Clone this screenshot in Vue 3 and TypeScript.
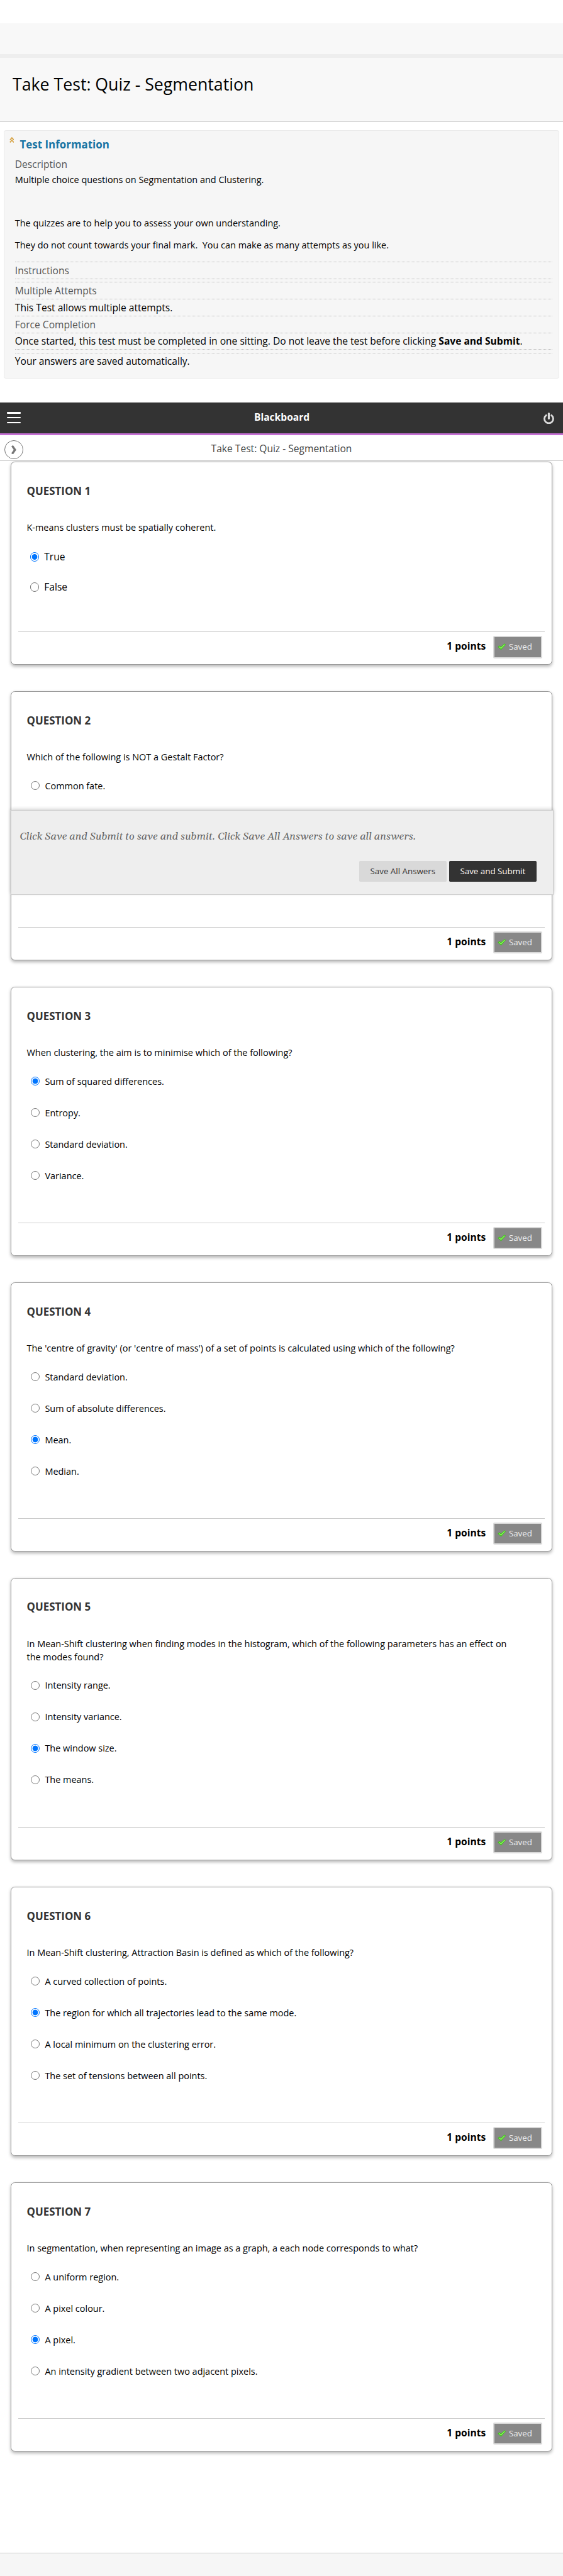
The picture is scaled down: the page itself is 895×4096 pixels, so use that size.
<script setup lang="ts">
interface Question {
  prompt: string
  options: string[]
  selected: number
  compact?: boolean
}

const title = 'Take Test: Quiz - Segmentation'

const questions: Question[] = [
  { prompt: 'K-means clusters must be spatially coherent.', options: ['True', 'False'], selected: 0, compact: true },
  { prompt: 'Which of the following is NOT a Gestalt Factor?', options: ['Common fate.'], selected: -1 },
  {
    prompt: 'When clustering, the aim is to minimise which of the following?',
    options: ['Sum of squared differences.', 'Entropy.', 'Standard deviation.', 'Variance.'],
    selected: 0,
  },
  {
    prompt: "The 'centre of gravity' (or 'centre of mass') of a set of points is calculated using which of the following?",
    options: ['Standard deviation.', 'Sum of absolute differences.', 'Mean.', 'Median.'],
    selected: 2,
  },
  {
    prompt:
      'In Mean-Shift clustering when finding modes in the histogram, which of the following parameters has an effect on the modes found?',
    options: ['Intensity range.', 'Intensity variance.', 'The window size.', 'The means.'],
    selected: 2,
  },
  {
    prompt: 'In Mean-Shift clustering, Attraction Basin is defined as which of the following?',
    options: [
      'A curved collection of points.',
      'The region for which all trajectories lead to the same mode.',
      'A local minimum on the clustering error.',
      'The set of tensions between all points.',
    ],
    selected: 1,
  },
  {
    prompt: 'In segmentation, when representing an image as a graph, a each node corresponds to what?',
    options: ['A uniform region.', 'A pixel colour.', 'A pixel.', 'An intensity gradient between two adjacent pixels.'],
    selected: 2,
  },
]
</script>

<template>
  <div class="page">
    <div class="top-strip"></div>
    <header class="page-title">
      <h1>{{ title }}</h1>
    </header>

    <section class="info">
      <div class="info-head">
        <svg class="collapse" viewBox="0 0 14 16">
          <path d="M1.5 8 L7 2 L12.5 8 M1.5 15 L7 9 L12.5 15" fill="none" stroke="#d5a03f" stroke-width="3" />
        </svg>
        <h2>Test Information</h2>
      </div>
      <div class="label first">Description</div>
      <div class="description">
        <p>Multiple choice questions on Segmentation and Clustering.</p>
        <p class="gap-before">The quizzes are to help you to assess your own understanding.</p>
        <p class="line-before">They do not count towards your final mark.&nbsp; You can make as many attempts as you like.</p>
      </div>
      <div class="row label">Instructions</div>
      <div class="spacer"></div>
      <div class="row label">Multiple Attempts</div>
      <div class="row">This Test allows multiple attempts.</div>
      <div class="row label">Force Completion</div>
      <div class="row">
        Once started, this test must be completed in one sitting. Do not leave the test before clicking
        <b>Save and Submit</b>.
      </div>
      <div class="spacer"></div>
      <div class="last">Your answers are saved automatically.</div>
    </section>

    <nav class="navbar">
      <div class="burger"><i></i><i></i><i></i></div>
      <span class="brand">Blackboard</span>
      <svg class="power" viewBox="0 0 34 34">
        <path d="M9.4 9.6 A12.6 12.6 0 1 0 24.6 9.6" fill="none" stroke="#dcdcdc" stroke-width="5" stroke-linecap="round" />
        <path d="M17 4.6 V19" stroke="#dcdcdc" stroke-width="5.6" stroke-linecap="round" />
      </svg>
    </nav>
    <div class="crumbs">
      <button class="expand">
        <svg viewBox="0 0 14 26"><path d="M2.4 1.5 L10.6 13 L2.4 24.5" fill="none" stroke="#777" stroke-width="6" /></svg>
      </button>
      <span>{{ title }}</span>
    </div>

    <main class="questions">
      <article v-for="(q, i) in questions" :key="i" class="card" :class="{ compact: q.compact, long: i === 4 }">
        <h3>QUESTION {{ i + 1 }}</h3>
        <p class="prompt">{{ q.prompt }}</p>
        <ul>
          <li v-for="(o, j) in q.options" :key="o">
            <span class="radio" :class="{ on: q.selected === j }"></span>
            <span class="option">{{ o }}</span>
          </li>
        </ul>
        <footer>
          <b>1 points</b>
          <span class="saved">
            <svg viewBox="0 0 24 20">
              <path d="M.5 10 L5.5 6 L9.5 10 L19.5 .5 L23.8 3.2 L10 19 Z" fill="#3fc41c" />
              <path d="M4 9.4 L9.8 14 L20.4 3.2" fill="none" stroke="#8df060" stroke-width="2.4" />
            </svg>
            <span>Saved</span>
          </span>
        </footer>
        <div v-if="i === 1" class="submit-bar">
          <p>Click Save and Submit to save and submit. Click Save All Answers to save all answers.</p>
          <div class="actions">
            <button>Save All Answers</button>
            <button class="primary">Save and Submit</button>
          </div>
        </div>
      </article>
    </main>
    <div class="page-foot"></div>
  </div>
</template>

<style>
html {
  font-size: 11.129px;
}
body {
  margin: 0;
  background: #fff;
}
</style>

<style scoped>
* {
  box-sizing: border-box;
}
h1,
h2,
h3,
p,
ul {
  margin: 0;
  padding: 0;
}
.page {
  display: flex;
  flex-direction: column;
  height: 4096px;
  overflow: hidden;
  background: #fff;
  color: #000;
  font-family: 'Open Sans', 'Noto Sans', sans-serif;
  font-size: 1.4rem;
}
.page > * {
  flex-shrink: 0;
}
svg {
  flex: none;
}
.top-strip {
  margin-top: 3.3rem;
  height: 5rem;
  background: #f8f8f8;
  border-bottom: 0.6rem solid #eee;
}
.page-title {
  height: 9.1rem;
  padding-top: 2.23rem;
  background: #f8f8f8;
  border-bottom: 1px solid #ccc;
}
.page-title h1 {
  padding-left: 1.8rem;
  font-size: 2.4rem;
  font-weight: 400;
  line-height: 3rem;
}
.info {
  display: flex;
  flex-direction: column;
  height: 35.5rem;
  margin: 1.2rem 0.55rem 0;
  padding: 0 0.9rem 0 1.5rem;
  border: 1px solid #ebebeb;
  border-radius: 0.3rem;
  background: #f6f6f6;
  line-height: 2.3rem;
}
.info-head {
  display: flex;
  align-items: flex-start;
  height: 4.1rem;
  margin-left: -0.82rem;
}
.collapse {
  width: 0.7rem;
  height: 0.8rem;
  margin: 0.92rem 0.82rem 0 0;
}
.info h2 {
  margin-top: 0.8rem;
  font-size: 1.52rem;
  line-height: 2.3rem;
  color: #1874a4;
}
.label {
  color: #555;
}
.description {
  height: 12.84rem;
  padding-top: 0.09rem;
  border-bottom: 1px dotted #bbb;
  font-size: 1.3rem;
  line-height: 1.9rem;
}
.label.first {
  margin-top: -0.44rem;
}
.gap-before {
  margin-top: 4.3rem;
}
.line-before {
  margin-top: 1.2rem;
}
.row {
  height: 2.4rem;
  padding-top: 0.06rem;
  border-bottom: 1px dotted #bbb;
  white-space: nowrap;
}
.spacer {
  height: 0.5rem;
  border-bottom: 1px dotted #bbb;
}
.navbar {
  display: flex;
  justify-content: space-between;
  height: 4.7rem;
  margin-top: 3.4rem;
  padding: 0 1.2rem 0 1rem;
  background: #333;
  border-bottom: 0.3rem solid #c46fd3;
}
.burger {
  display: flex;
  flex-direction: column;
  gap: 0.5rem;
  width: 2rem;
  padding-top: 1.4rem;
}
.burger i {
  height: 0.2rem;
  border-radius: 0.1rem;
  background: #fff;
}
.brand {
  padding-top: 1.05rem;
  line-height: 2rem;
  font-weight: 700;
  color: #fff;
}
.power {
  width: 1.7rem;
  height: 1.7rem;
  margin-top: 1.4rem;
}
.crumbs {
  display: grid;
  grid-template-columns: 2.7rem 1fr 2.7rem;
  height: 3.7rem;
  padding: 0 0.6rem;
  border-bottom: 1px solid #ccc;
  color: #444;
  text-align: center;
}
.crumbs span {
  padding-top: 0.85rem;
  line-height: 2rem;
}
.expand {
  display: flex;
  align-items: center;
  justify-content: center;
  width: 2.7rem;
  height: 2.7rem;
  margin: 0.68rem 0 0;
  padding: 0 0 0 0.1rem;
  border: 1px solid #777;
  border-radius: 50%;
  background: #fff;
}
.expand svg {
  width: 0.7rem;
  height: 1.3rem;
}
.questions {
  display: flex;
  flex-direction: column;
  gap: 3.8rem;
  padding: 0.1rem 1.5rem 0;
}
.card {
  position: relative;
  display: flex;
  flex-direction: column;
  height: 38.43rem;
  padding: 3.07rem 1.05rem 0;
  border: 1px solid #999;
  border-radius: 0.6rem;
  background: #fff;
  box-shadow: 0 0.2rem 0.5rem rgba(0, 0, 0, 0.28);
}
.card.long {
  height: 40.33rem;
}
.card.compact {
  height: 29rem;
}
.card h3 {
  padding-left: 1.18rem;
  font-size: 1.52rem;
  line-height: 2rem;
  color: #333;
}
.prompt {
  width: 71.8rem;
  margin-top: 3.33rem;
  padding-left: 1.18rem;
  font-size: 1.3rem;
  line-height: 1.88rem;
}
.card ul {
  margin-top: 0.83rem;
  padding-left: 1.76rem;
  list-style: none;
  font-size: 1.3rem;
}
.card li {
  display: flex;
  align-items: center;
  gap: 0.72rem;
  height: 4.495rem;
}
.compact ul {
  margin-top: 1.07rem;
  padding-left: 1.66rem;
  font-size: 1.4rem;
}
.compact li {
  height: 4.3rem;
}
.compact .option {
  padding-bottom: 0.15rem;
}
.radio {
  width: 1.3rem;
  height: 1.3rem;
  border: 1px solid #777;
  border-radius: 50%;
  background: #fff;
}
.radio.on {
  border-color: #0075ff;
  background: radial-gradient(circle, #0075ff 0 4.1px, #fff 4.7px);
}
.card footer {
  display: flex;
  justify-content: flex-end;
  height: 4.65rem;
  margin-top: auto;
  padding: 0.54rem 0.3rem 0 0;
  border-top: 1px solid #ccc;
}
.card footer b {
  margin-right: 1.1rem;
  padding-top: 0.44rem;
  line-height: 2rem;
}
.saved {
  display: flex;
  align-items: center;
  gap: 0.42rem;
  width: 7rem;
  height: 3.15rem;
  padding-left: 0.4rem;
  border: 0.2rem solid #d9d9d9;
  border-radius: 0.2rem;
  background: #888;
  color: #eee;
  font-size: 1.2rem;
}
.saved span {
  padding-bottom: 0.15rem;
}
.saved svg {
  width: 1.2rem;
  height: 1rem;
}
.submit-bar {
  position: absolute;
  top: 16.82rem;
  left: -1px;
  width: 77.6rem;
  height: 12.2rem;
  padding: 2.84rem 2.4rem 0 1.22rem;
  border: 1px solid #ccc;
  background: #eee;
  box-shadow: 0 -0.2rem 0.5rem rgba(0, 0, 0, 0.18);
}
.submit-bar p {
  font-family: Gelasio, 'Liberation Serif', serif;
  font-size: 1.472rem;
  font-style: italic;
  line-height: 2rem;
  color: #666;
  white-space: nowrap;
}
.actions {
  display: flex;
  justify-content: flex-end;
  gap: 0.4rem;
  margin-top: 2.42rem;
}
.actions button {
  width: 12.45rem;
  height: 2.95rem;
  padding: 0 0 0.15rem;
  border: 0;
  border-radius: 0.15rem;
  background: #d9d9d9;
  color: #333;
  font: 1.2rem 'Open Sans', 'Noto Sans', sans-serif;
}
.actions .primary {
  background: #333;
  color: #fff;
}
.page-foot {
  flex: 1;
  margin-top: 14.5rem;
  border-top: 1px solid #ccc;
  background: #f6f6f6;
}
</style>
